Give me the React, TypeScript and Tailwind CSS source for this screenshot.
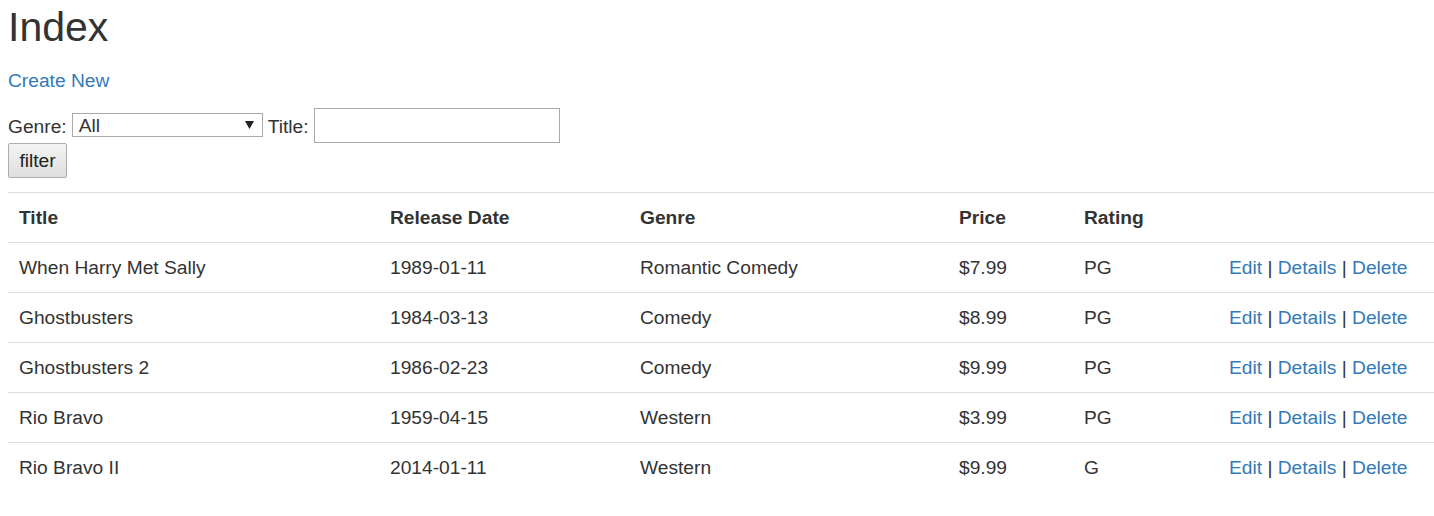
import React from "react";

const movies = [
  { title: "When Harry Met Sally", date: "1989-01-11", genre: "Romantic Comedy", price: "$7.99", rating: "PG" },
  { title: "Ghostbusters", date: "1984-03-13", genre: "Comedy", price: "$8.99", rating: "PG" },
  { title: "Ghostbusters 2", date: "1986-02-23", genre: "Comedy", price: "$9.99", rating: "PG" },
  { title: "Rio Bravo", date: "1959-04-15", genre: "Western", price: "$3.99", rating: "PG" },
  { title: "Rio Bravo II", date: "2014-01-11", genre: "Western", price: "$9.99", rating: "G" },
];

export default function App() {
  const font = { fontFamily: '"Liberation Sans", Arial, Helvetica, sans-serif' };
  return (
    <div className="bg-white min-h-[516px] text-[#333] text-[19.2px] leading-[27px]" style={font}>
      <div className="pl-2">
        <h1 className="mt-[5px] text-[41px] leading-[45px] font-normal text-[#333]">Index</h1>
        <p className="mt-[17px]">
          <a className="text-[#337ab7] cursor-pointer">Create New</a>
        </p>
        <div className="mt-[14px] flex items-start h-[35px]">
          <span className="mt-[5px]">Genre:</span>
          <div className="ml-[5px] mt-[5px] w-[191px] h-[24px] border border-[#a9a9a9] flex items-center justify-between pl-[6px] pr-[8px] leading-[22px]">
            <span className="pt-[2px]">All</span>
            <svg width="9" height="8" viewBox="0 0 9 8">
              <path d="M0 0 L9 0 L4.5 8 Z" fill="#222" />
            </svg>
          </div>
          <span className="ml-[5px] mt-[5px]">Title:</span>
          <div className="ml-[5px] w-[246px] h-[35px] border border-[#a9a9a9] bg-white" />
        </div>
        <button className="w-[59px] h-[35px] border border-[#adadad] rounded-[2px] bg-gradient-to-b from-[#f4f4f4] to-[#dedede] text-[#222] text-[19.2px] leading-[27px] flex items-center justify-center">
          filter
        </button>
      </div>
      <table className="ml-2 mt-[14px] w-[calc(100%-8px)] border-collapse table-fixed">
        <colgroup>
          <col className="w-[371px]" />
          <col className="w-[250px]" />
          <col className="w-[319px]" />
          <col className="w-[125px]" />
          <col className="w-[145px]" />
          <col />
        </colgroup>
        <thead>
          <tr>
            {["Title", "Release Date", "Genre", "Price", "Rating", ""].map((h, i) => (
              <th key={i} className="border-t border-[#ddd] text-left font-bold px-[11px] py-[11px] leading-[27px]">
                {h}
              </th>
            ))}
          </tr>
        </thead>
        <tbody>
          {movies.map((m) => (
            <tr key={m.title}>
              <td className="border-t border-[#ddd] px-[11px] py-[11px] leading-[27px]">{m.title}</td>
              <td className="border-t border-[#ddd] px-[11px] py-[11px] leading-[27px]">{m.date}</td>
              <td className="border-t border-[#ddd] px-[11px] py-[11px] leading-[27px]">{m.genre}</td>
              <td className="border-t border-[#ddd] px-[11px] py-[11px] leading-[27px]">{m.price}</td>
              <td className="border-t border-[#ddd] px-[11px] py-[11px] leading-[27px]">{m.rating}</td>
              <td className="border-t border-[#ddd] px-[11px] py-[11px] leading-[27px] whitespace-nowrap">
                <a className="text-[#337ab7]">Edit</a> | <a className="text-[#337ab7]">Details</a> |{" "}
                <a className="text-[#337ab7]">Delete</a>
              </td>
            </tr>
          ))}
        </tbody>
      </table>
    </div>
  );
}
